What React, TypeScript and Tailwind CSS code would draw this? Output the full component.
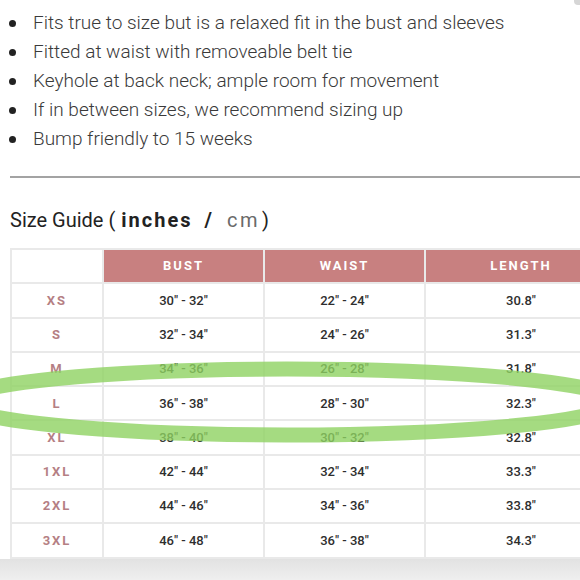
const bullets = [
  'Fits true to size but is a relaxed fit in the bust and sleeves',
  'Fitted at waist with removeable belt tie',
  'Keyhole at back neck; ample room for movement',
  'If in between sizes, we recommend sizing up',
  'Bump friendly to 15 weeks',
];

const rows = [
  ['XS', '30" - 32"', '22" - 24"', '30.8"'],
  ['S', '32" - 34"', '24" - 26"', '31.3"'],
  ['M', '34" - 36"', '26" - 28"', '31.8"'],
  ['L', '36" - 38"', '28" - 30"', '32.3"'],
  ['XL', '38" - 40"', '30" - 32"', '32.8"'],
  ['1XL', '42" - 44"', '32" - 34"', '33.3"'],
  ['2XL', '44" - 46"', '34" - 36"', '33.8"'],
  ['3XL', '46" - 48"', '36" - 38"', '34.3"'],
];

const cell = 'border-2 border-[#e9e9e9] text-center align-middle';

export default function App() {
  return (
    <div className="relative flex h-[580px] w-[580px] flex-col overflow-hidden bg-white font-['Roboto',sans-serif]">
      <ul className="flex flex-col pt-[9px] pl-[9px]">
        {bullets.map((b) => (
          <li key={b} className="flex h-[29px] items-center gap-[17px] text-[19px] font-light text-[#3a3a3a]">
            <span className="size-[7px] shrink-0 rounded-full bg-[#222]" />
            <span>{b}</span>
          </li>
        ))}
      </ul>

      <div className="mt-[22px] ml-[10px] h-[2px] bg-[#a3a3a3]" />

      <div className="mt-[28px] ml-[10px] flex h-[28px] items-center text-[20px] text-[#222]">
        <span>Size Guide (</span>
        <span className="ml-[6px] font-bold tracking-[2px]">inches</span>
        <span className="ml-[12px] font-bold">/</span>
        <span className="ml-[15px] tracking-[2.5px] text-[#6a6a6a]">cm</span>
        <span className="ml-[2px]">)</span>
      </div>

      <div className="mt-[14px] pl-[10px]">
        <table className="w-[606px] table-fixed border-collapse text-[13px]">
          <colgroup>
            <col className="w-[92px]" />
            <col className="w-[161px]" />
            <col className="w-[161px]" />
            <col className="w-[192px]" />
          </colgroup>
          <thead>
            <tr className="h-[34.3px]">
              <th className={cell} />
              {['BUST', 'WAIST', 'LENGTH'].map((h) => (
                <th key={h} className={`${cell} bg-[#c88080] font-bold tracking-[2px] text-white`}>
                  {h}
                </th>
              ))}
            </tr>
          </thead>
          <tbody>
            {rows.map(([size, bust, waist, length]) => (
              <tr key={size} className="h-[34.3px]">
                <td className={`${cell} font-bold tracking-[2px] text-[#b57f84]`}>{size}</td>
                <td className={`${cell} font-medium text-[#2e2e2e]`}>{bust}</td>
                <td className={`${cell} font-medium text-[#2e2e2e]`}>{waist}</td>
                <td className={`${cell} font-medium text-[#2e2e2e]`}>{length}</td>
              </tr>
            ))}
          </tbody>
        </table>
      </div>

      <div className="flex-1 bg-gradient-to-b from-[#e2e2e2] to-[#efefef]" />

      <div className="absolute right-0 top-0 h-[5px] w-[6px] rounded-bl-sm bg-[#d6d6d6]" />

      <svg className="pointer-events-none absolute inset-0" width="580" height="580" viewBox="0 0 580 580">
        <ellipse cx="287" cy="402" rx="328" ry="33" fill="none" stroke="#8fd262" strokeOpacity="0.8" strokeWidth="15" />
      </svg>
    </div>
  );
}
